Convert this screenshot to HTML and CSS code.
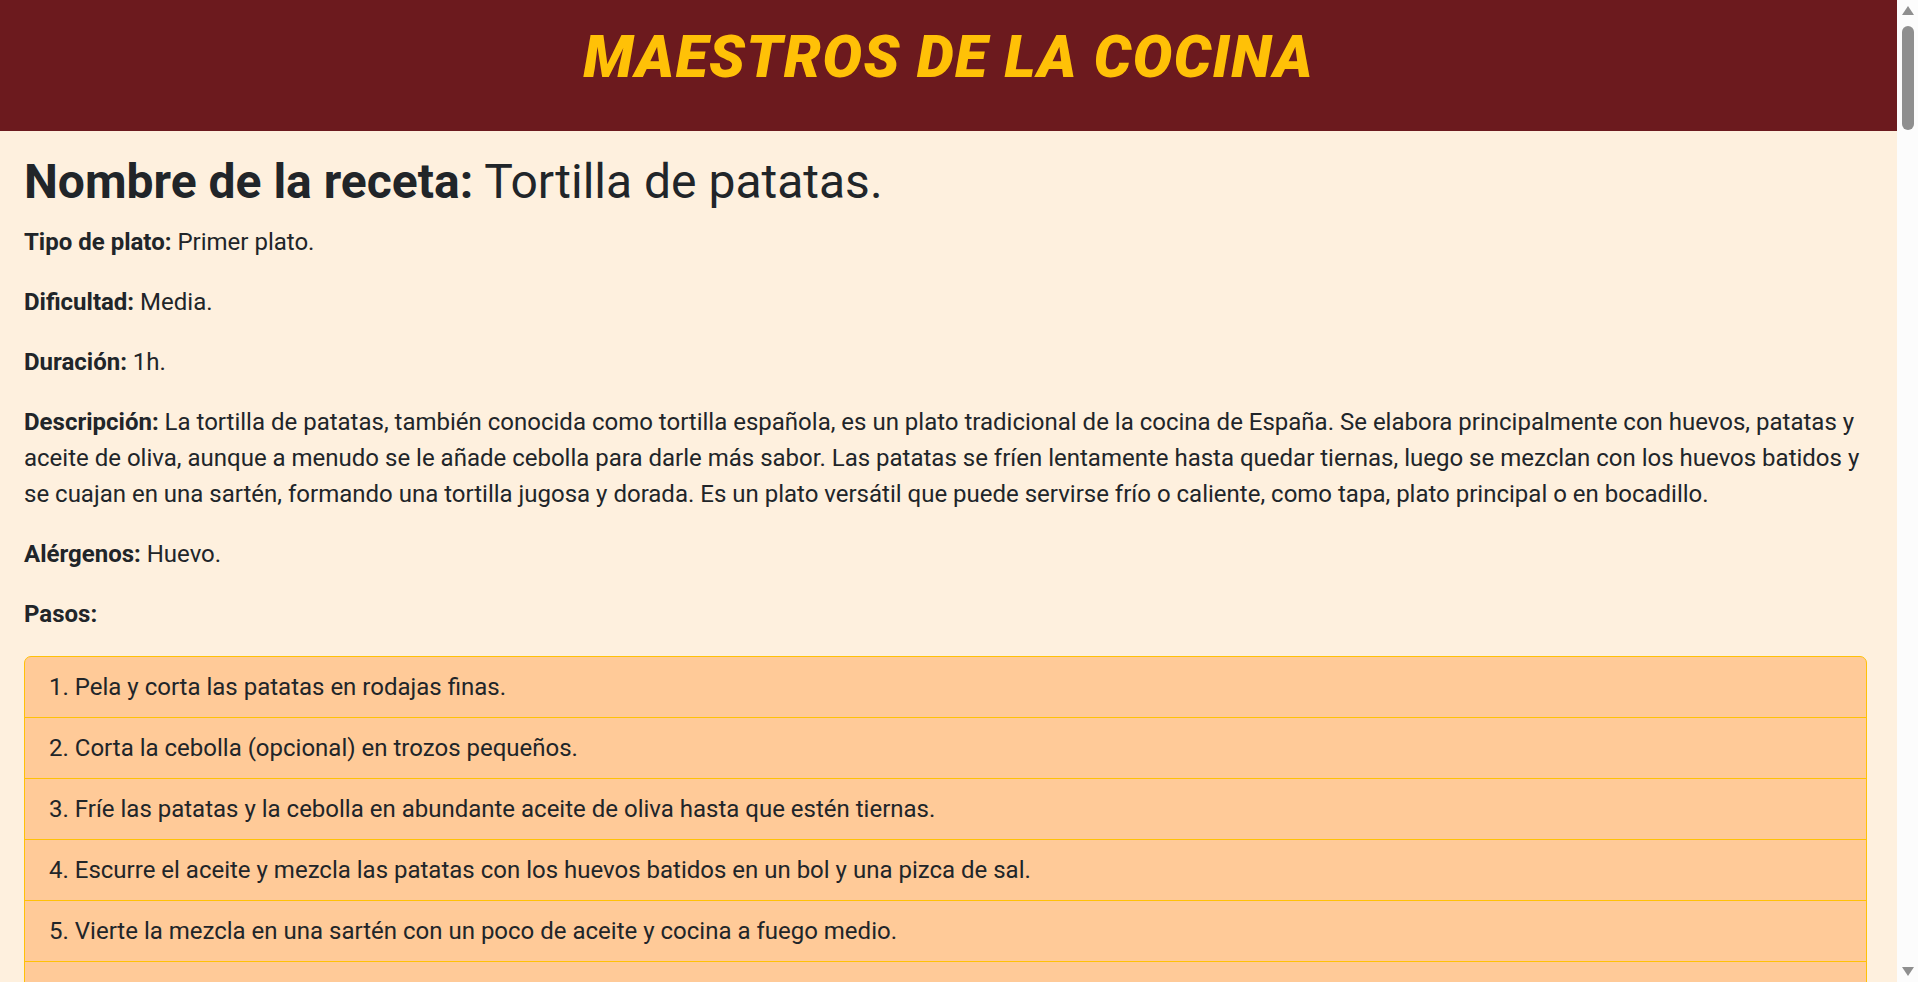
FILE: index.html
```html
<!DOCTYPE html>
<html lang="es">
<head>
<meta charset="utf-8">
<title>Maestros de la cocina</title>
<link rel="stylesheet" href="styles.css">
</head>
<body>
<div class="page">
  <header class="site-header">
    <h1 class="site-title">MAESTROS DE LA COCINA</h1>
  </header>
  <main class="recipe">
    <h2 class="recipe-name"><strong>Nombre de la receta:</strong> Tortilla de patatas.</h2>
    <p><strong>Tipo de plato:</strong> Primer plato.</p>
    <p><strong>Dificultad:</strong> Media.</p>
    <p><strong>Duración:</strong> 1h.</p>
    <p><strong>Descripción:</strong> La tortilla de patatas, también conocida como tortilla española, es un plato tradicional de la cocina de España. Se elabora principalmente con huevos, patatas y aceite de oliva, aunque a menudo se le añade cebolla para darle más sabor. Las patatas se fríen lentamente hasta quedar tiernas, luego se mezclan con los huevos batidos y se cuajan en una sartén, formando una tortilla jugosa y dorada. Es un plato versátil que puede servirse frío o caliente, como tapa, plato principal o en bocadillo.</p>
    <p><strong>Alérgenos:</strong> Huevo.</p>
    <p><strong>Pasos:</strong></p>
    <ol class="steps">
      <li class="step">Pela y corta las patatas en rodajas finas.</li>
      <li class="step">Corta la cebolla (opcional) en trozos pequeños.</li>
      <li class="step">Fríe las patatas y la cebolla en abundante aceite de oliva hasta que estén tiernas.</li>
      <li class="step">Escurre el aceite y mezcla las patatas con los huevos batidos en un bol y una pizca de sal.</li>
      <li class="step">Vierte la mezcla en una sartén con un poco de aceite y cocina a fuego medio.</li>
      <li class="step">Da la vuelta a la tortilla con ayuda de un plato y cocina por el otro lado.</li>
      <li class="step">Sirve la tortilla caliente o fría.</li>
    </ol>
  </main>
</div>
<div class="scrollbar" aria-hidden="true">
  <span class="scroll-arrow up"></span>
  <span class="scroll-thumb"></span>
  <span class="scroll-arrow down"></span>
</div>
</body>
</html>
```
FILE: styles.css
```css
html, body { margin: 0; padding: 0; }
body {
  background: #fef0de;
  color: #212529;
  font-family: "Roboto", sans-serif;
  font-size: 24px;
  line-height: 1.5;
}
.page { margin-right: 21px; }
.site-header {
  background: #6c1a1e;
  height: 131px;
  box-sizing: border-box;
  padding-top: 27px;
  text-align: center;
}
.site-title {
  margin: 0;
  color: #ffc107;
  font-family: "Roboto", sans-serif;
  font-weight: 900;
  font-style: italic;
  font-size: 59px;
  line-height: 1;
  letter-spacing: 1.4px;
}
.recipe { padding: 22px 30px 0 24px; }
.recipe-name {
  margin: 0 0 13px;
  font-size: 48px;
  font-weight: 400;
  line-height: 1.2;
}
.recipe-name strong, .recipe p strong { font-weight: 700; }
.recipe p { margin: 0 0 24px; }
.steps {
  list-style: none;
  margin: 0;
  padding: 0;
  border: 1px solid #ffc107;
  border-radius: 7px;
  background: #ffca98;
  counter-reset: step;
}
.step {
  counter-increment: step;
  padding: 12px 24px;
  border-top: 1px solid #ffc107;
}
.step:first-child { border-top: 0; }
.step::before { content: counter(step) ". "; }

.scrollbar {
  position: fixed;
  top: 0;
  right: 0;
  width: 21px;
  height: 100vh;
  background: #fcfcfc;
}
.scroll-thumb {
  position: absolute;
  left: 5px;
  top: 26px;
  width: 12px;
  height: 104px;
  border-radius: 6px;
  background: #8f8f8f;
}
.scroll-arrow {
  position: absolute;
  left: 5px;
  width: 0;
  height: 0;
  border-left: 6px solid transparent;
  border-right: 6px solid transparent;
}
.scroll-arrow.up { top: 6px; border-bottom: 9px solid #8f8f8f; }
.scroll-arrow.down { bottom: 6px; border-top: 9px solid #8f8f8f; }
```
